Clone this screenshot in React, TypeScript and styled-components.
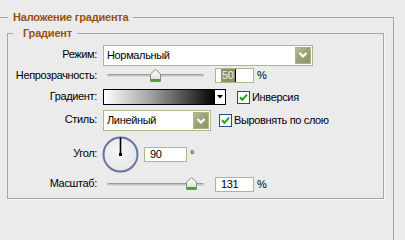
import React from "react";
import styled, { createGlobalStyle } from "styled-components";

const GlobalStyle = createGlobalStyle`
  html, body {
    margin: 0;
    padding: 0;
    background: #ebebeb;
  }
  body {
    font-family: "Liberation Sans", Arial, sans-serif;
    font-size: 11px;
    letter-spacing: -0.35px;
    color: #000;
  }
`;

const Page = styled.div`
  width: 405px;
  height: 240px;
  overflow: hidden;
  background: #ebebeb;
`;

const OuterGroup = styled.fieldset`
  box-sizing: border-box;
  margin: 11px 0 0 0;
  width: 394px;
  min-height: 260px;
  border: 1px solid #a6a69e;
  border-left: none;
  border-bottom: none;
  padding: 3px 0 0 7px;
`;

const InnerGroup = styled.fieldset`
  box-sizing: border-box;
  margin: 0;
  width: 377px;
  border: 1px solid #a6a69e;
  box-shadow: 1px 1px 0 #f8f8f8;
  padding: 4px 0 6px 0;
`;

const Legend = styled.legend<{ $inset: number; $lead: number }>`
  margin-left: ${(p) => p.$inset}px;
  padding: 0 5px 0 ${(p) => p.$lead}px;
  font-weight: bold;
  letter-spacing: -0.2px;
  line-height: 13px;
  color: #95520f;
`;

const Form = styled.div`
  display: grid;
  grid-template-columns: 89px 1fr;
  grid-template-rows: 22px 19px 24px 23px 44px 16px;
  column-gap: 6px;
  align-items: center;
`;

const Label = styled.span<{ $lift?: number }>`
  text-align: right;
  line-height: 13px;
  padding-bottom: ${(p) => p.$lift ?? 2}px;
`;

const Controls = styled.div`
  display: flex;
  align-items: center;
`;

const Select = styled.div<{ $w: number }>`
  box-sizing: border-box;
  width: ${(p) => p.$w}px;
  height: 21px;
  display: flex;
  align-items: center;
  justify-content: space-between;
  background: #fff;
  border: 1px solid #a9b98c;
  padding: 0 1px 0 3px;
  line-height: 13px;
`;

const DropButton = styled.span`
  box-sizing: border-box;
  width: 16px;
  height: 17px;
  display: flex;
  align-items: center;
  justify-content: center;
  background: linear-gradient(135deg, #b4bc94 0%, #98a274 50%, #8c9666 100%);
  border: 1px solid #aab48a;
`;

const SliderBox = styled.div<{ $w: number }>`
  position: relative;
  width: ${(p) => p.$w}px;
  height: 14px;
  margin-left: 4px;
  display: flex;
  align-items: center;
`;

const Track = styled.div`
  width: 100%;
  height: 3px;
  box-sizing: border-box;
  border-top: 1px solid #9c9c9c;
  border-bottom: 1px solid #d8d8d8;
  background: #c4c4c4;
  border-radius: 2px;
`;

const Thumb = styled.svg`
  position: absolute;
  top: 0;
`;

const Field = styled.div<{ $w: number; $ml: number }>`
  box-sizing: border-box;
  width: ${(p) => p.$w}px;
  height: 15px;
  margin-left: ${(p) => p.$ml}px;
  background: #fff;
  border: 1px solid #a9b98c;
  padding-left: 5px;
  line-height: 13px;
  display: flex;
  align-items: center;
`;

const Selected = styled.span`
  background: #8c9266;
  color: #ecefdc;
  padding: 0 1px;
  border-right: 1px solid #000;
`;

const Unit = styled.span<{ $top?: boolean }>`
  margin-left: 3px;
  line-height: 13px;
  align-self: ${(p) => (p.$top ? "flex-start" : "center")};
  margin-top: ${(p) => (p.$top ? "12px" : "0")};
`;

const Swatch = styled.div`
  box-sizing: border-box;
  width: 112px;
  height: 16px;
  border: 1px solid #000;
  background: linear-gradient(to right, #ffffff 0%, #a8a8a8 40%, #4a4a4a 75%, #050505 100%);
`;

const SwatchArrow = styled.div`
  box-sizing: border-box;
  width: 12px;
  height: 16px;
  margin-left: -1px;
  border: 1px solid #000;
  background: #fff;
  display: flex;
  align-items: center;
  justify-content: center;
`;

const Check = styled.label<{ $ml: number }>`
  display: flex;
  align-items: center;
  gap: 2px;
  margin-left: ${(p) => p.$ml}px;
  line-height: 13px;
`;

const Dial = styled.svg`
  margin-left: -1px;
`;

const Chevron = () => (
  <svg width="10" height="8" viewBox="0 0 10 8">
    <path d="M1.5 2 L5 5.5 L8.5 2" fill="none" stroke="#fff" strokeWidth="2.2" />
  </svg>
);

const CheckMark = () => (
  <svg width="13" height="13" viewBox="0 0 13 13">
    <rect x="0.5" y="0.5" width="12" height="12" fill="#fff" stroke="#1c4f7e" />
    <path d="M3 6.2 L5.4 8.8 L10 3.6" fill="none" stroke="#1fa11f" strokeWidth="2" />
  </svg>
);

const Slider: React.FC<{ value: number; min: number; max: number }> = ({ value, min, max }) => {
  const w = 97;
  const left = ((value - min) / (max - min)) * (w - 1) - 5;
  return (
    <SliderBox $w={w}>
      <Track />
      <Thumb width="11" height="13" viewBox="0 0 11 13" style={{ left }}>
        <defs>
          <linearGradient id="tg" x1="0" y1="0" x2="0" y2="1">
            <stop offset="0" stopColor="#ffffff" />
            <stop offset="1" stopColor="#dcdcd4" />
          </linearGradient>
        </defs>
        <path d="M0.5 5 L5.5 0.5 L10.5 5 L10.5 12.5 L0.5 12.5 Z" fill="url(#tg)" stroke="#8c8c84" />
        <rect x="1" y="10" width="9" height="2.5" fill="#4f9f2c" />
      </Thumb>
    </SliderBox>
  );
};

export default function App() {
  return (
    <Page>
      <GlobalStyle />
      <OuterGroup>
        <Legend $inset={1} $lead={5}>Наложение градиента</Legend>
        <InnerGroup>
          <Legend $inset={5} $lead={10}>Градиент</Legend>
          <Form>
            <Label>Режим:</Label>
            <Controls>
              <Select $w={210}>
                <span>Нормальный</span>
                <DropButton>
                  <Chevron />
                </DropButton>
              </Select>
            </Controls>

            <Label $lift={0}>Непрозрачность:</Label>
            <Controls>
              <Slider value={50} min={0} max={100} />
              <Field $w={39} $ml={11}>
                <Selected>50</Selected>
              </Field>
              <Unit>%</Unit>
            </Controls>

            <Label>Градиент:</Label>
            <Controls>
              <Swatch />
              <SwatchArrow>
                <svg width="6" height="4" viewBox="0 0 6 4">
                  <path d="M0 0 H6 L3 3.5 Z" fill="#000" />
                </svg>
              </SwatchArrow>
              <Check $ml={11}>
                <CheckMark />
                <span>Инверсия</span>
              </Check>
            </Controls>

            <Label>Стиль:</Label>
            <Controls>
              <Select $w={108}>
                <span>Линейный</span>
                <DropButton>
                  <Chevron />
                </DropButton>
              </Select>
              <Check $ml={8}>
                <CheckMark />
                <span>Выровнять по слою</span>
              </Check>
            </Controls>

            <Label $lift={2}>Угол:</Label>
            <Controls>
              <Dial width="37" height="37" viewBox="0 0 37 37">
                <defs>
                  <radialGradient id="dg" cx="0.45" cy="0.4" r="0.6">
                    <stop offset="0" stopColor="#f6f6f6" />
                    <stop offset="1" stopColor="#e6e6e6" />
                  </radialGradient>
                </defs>
                <circle cx="18.5" cy="18.5" r="17" fill="url(#dg)" stroke="#6675a2" strokeWidth="2" />
                <line x1="18.5" y1="18.5" x2="18.5" y2="1.5" stroke="#000" strokeWidth="1.6" />
                <rect x="17" y="17" width="3" height="3" fill="#000" />
              </Dial>
              <Field $w={43} $ml={5}>90</Field>
              <Unit $top>°</Unit>
            </Controls>

            <Label $lift={1}>Масштаб:</Label>
            <Controls>
              <Slider value={131} min={1} max={150} />
              <Field $w={39} $ml={11}>131</Field>
              <Unit>%</Unit>
            </Controls>
          </Form>
        </InnerGroup>
      </OuterGroup>
    </Page>
  );
}
